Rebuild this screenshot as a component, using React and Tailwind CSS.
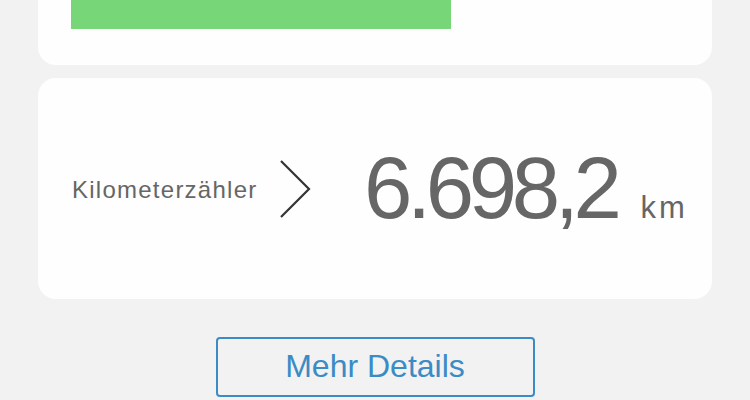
import React from 'react';

const FONT = { fontFamily: '"Liberation Sans", Arial, sans-serif' };

function Chevron() {
  return (
    <svg width="34" height="60" viewBox="0 0 34 60" className="shrink-0">
      <path d="M2 2 L30 30 L2 58" fill="none" stroke="#333" strokeWidth="2.2" />
    </svg>
  );
}

export default function App() {
  return (
    <div className="w-[750px] h-[400px] overflow-hidden bg-[#f2f2f2] px-[38px] flex flex-col" style={FONT}>
      {/* top card (cut off) */}
      <div className="h-[65px] shrink-0 bg-[#fefefe] rounded-b-[18px] pl-[33px]">
        <div className="w-[380px] h-[29px] bg-[#77d677]" />
      </div>

      {/* odometer card */}
      <div className="mt-[13px] h-[221px] shrink-0 bg-[#fefefe] rounded-[18px] flex items-center pl-[34px]">
        <span className="w-[207px] text-[24px] tracking-[1.25px] text-[#666] pt-[3px]">Kilometerzähler</span>
        <Chevron />
        <div className="ml-[51px] flex items-baseline text-[#666] pb-[2px]">
          <span className="text-[87px] tracking-[-5.4px] leading-none">6.698,2</span>
          <span className="ml-[24px] text-[31px] tracking-[3px]">km</span>
        </div>
      </div>

      <div className="mt-[38px] flex justify-center">
        <button className="w-[319px] h-[60px] border-2 border-[#3b8bc5] rounded-[4px] text-[#3b8bc5] text-[32px] leading-none pb-[2px]">
          Mehr Details
        </button>
      </div>
    </div>
  );
}
